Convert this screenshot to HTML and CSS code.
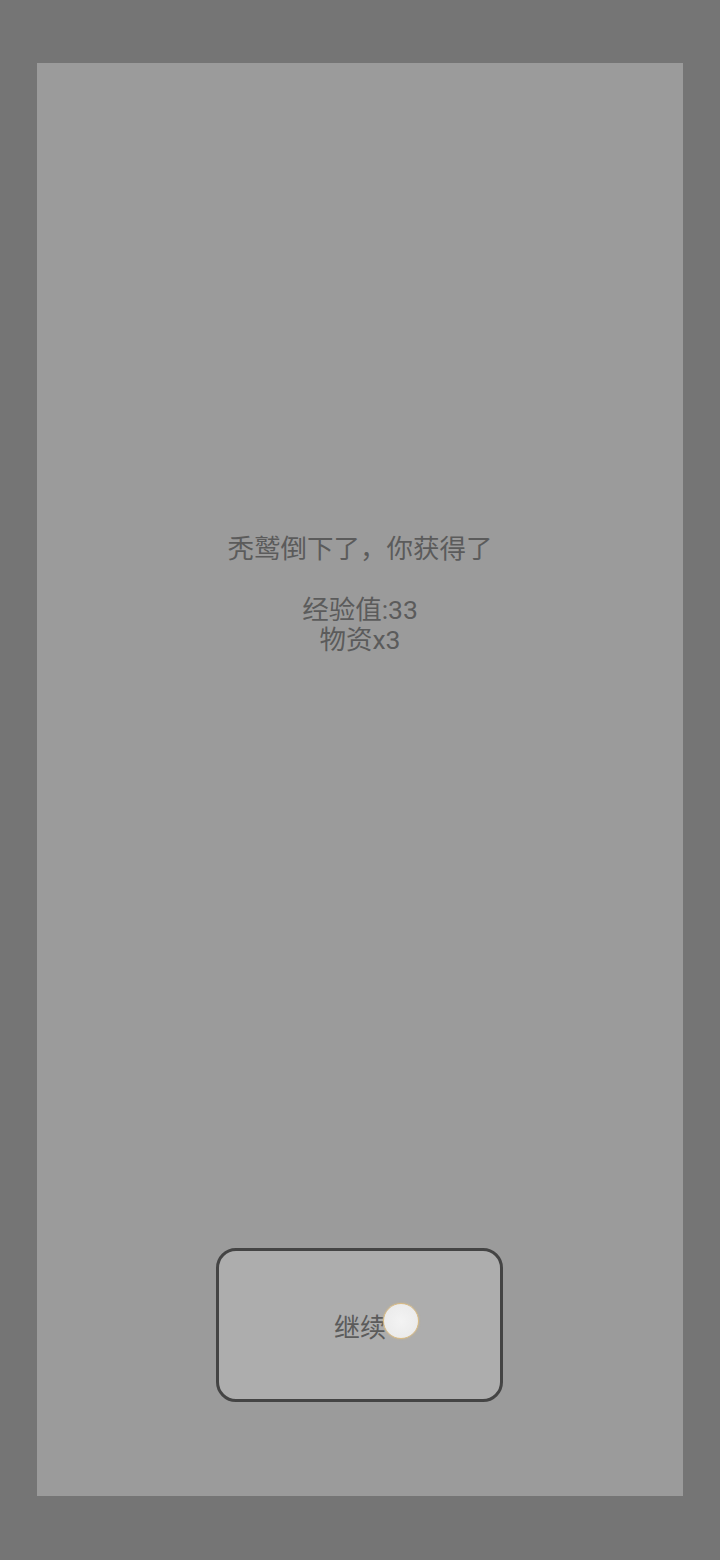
FILE: index.html
```html
<!DOCTYPE html>
<html lang="zh">
<head>
<meta charset="utf-8">
<title>结果</title>
<link rel="stylesheet" href="styles.css">
</head>
<body>
<div class="screen">
  <div class="panel">
    <div class="message">
      <div class="line">秃鹫倒下了，你获得了</div>
      <div class="line">&nbsp;</div>
      <div class="line">经验值:33</div>
      <div class="line">物资x3</div>
    </div>
    <div class="actions">
      <div class="btn">继续<span class="touch"></span></div>
    </div>
  </div>
</div>
</body>
</html>
```
FILE: styles.css
```css
html, body {
  margin: 0;
  padding: 0;
  background: #757575;
}
.screen {
  width: 720px;
  height: 1560px;
  box-sizing: border-box;
  padding: 63px 37px 64px 37px;
}
.panel {
  height: 1433px;
  background: #9b9b9b;
  display: flex;
  flex-direction: column;
  align-items: center;
  font-family: Roboto, "Noto Sans CJK SC", sans-serif;
  color: #5b5b5b;
}
.message {
  margin-top: 470.5px;
  text-align: center;
  font-size: 26.5px;
  line-height: 30.5px;
}
.actions {
  margin-top: auto;
  margin-bottom: 94px;
  margin-right: 2px;
}
.btn {
  position: relative;
  width: 287px;
  height: 154px;
  box-sizing: border-box;
  border: 3px solid #444444;
  border-radius: 20px;
  background: #adadad;
  display: flex;
  align-items: center;
  justify-content: center;
  font-size: 26px;
  padding-top: 0;
  padding-left: 2px;
  color: #5b5b5b;
}
.touch {
  position: absolute;
  left: 164px;
  top: 52px;
  width: 34px;
  height: 34px;
  border-radius: 50%;
  background: radial-gradient(circle, #f3f3f3 0%, #ececec 65%, #e4e4e4 100%);
  border: 1.5px solid #dcbd84;
  box-shadow: 0 0 2px rgba(220, 190, 130, 0.7);
}
```
